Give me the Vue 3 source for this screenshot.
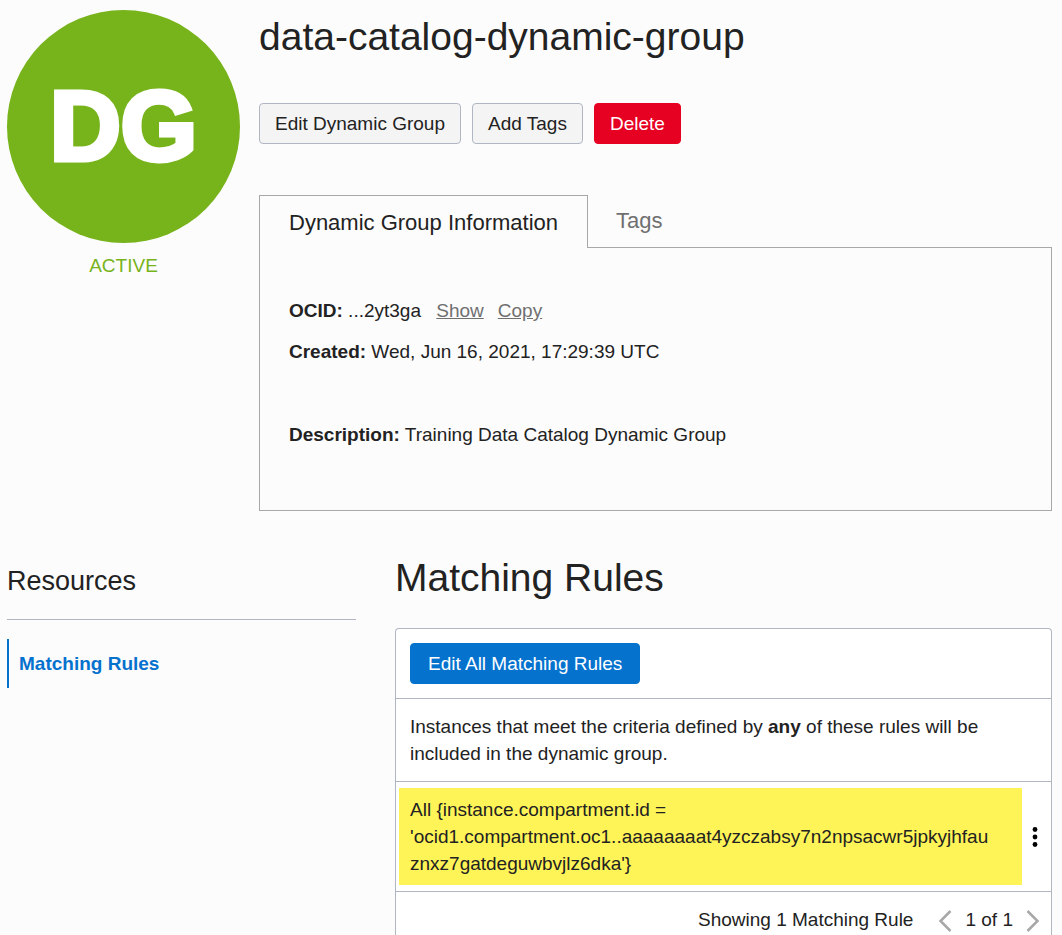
<script setup>
import { ref } from 'vue'

const activeTab = ref('info')
const showOcid = ref(false)
const rules = [
  "All {instance.compartment.id = 'ocid1.compartment.oc1..aaaaaaaat4yzczabsy7n2npsacwr5jpkyjhfauznxz7gatdeguwbvjlz6dka'}",
]
</script>

<template>
  <div class="page">
    <header class="summary">
      <aside class="status">
        <div class="badge">DG</div>
        <p class="state">ACTIVE</p>
      </aside>

      <div class="details">
        <h1>data-catalog-dynamic-group</h1>
        <div class="actions">
          <button type="button" class="btn">Edit Dynamic Group</button>
          <button type="button" class="btn">Add Tags</button>
          <button type="button" class="btn danger">Delete</button>
        </div>

        <div class="tabs" role="tablist">
          <button type="button" role="tab" class="tab" :class="{ active: activeTab === 'info' }" :aria-selected="activeTab === 'info'" @click="activeTab = 'info'">Dynamic Group Information</button>
          <button type="button" role="tab" class="tab" :class="{ active: activeTab === 'tags' }" :aria-selected="activeTab === 'tags'" @click="activeTab = 'tags'">Tags</button>
        </div>
        <div class="panel" role="tabpanel">
          <p><strong>OCID:</strong> ...2yt3ga <a href="#" class="first" @click.prevent="showOcid = !showOcid">Show</a><a href="#" @click.prevent>Copy</a></p>
          <p><strong>Created:</strong> Wed, Jun 16, 2021, 17:29:39 UTC</p>
          <p class="description"><strong>Description:</strong> Training Data Catalog Dynamic Group</p>
        </div>
      </div>
    </header>

    <div class="lower">
      <nav class="resources" aria-label="Resources">
        <h2>Resources</h2>
        <a href="#rules">Matching Rules</a>
      </nav>

      <main id="rules">
        <h1>Matching Rules</h1>
        <section class="card">
          <div class="toolbar">
            <button type="button" class="btn primary">Edit All Matching Rules</button>
          </div>
          <p class="intro">Instances that meet the criteria defined by <strong>any</strong> of these rules will be included in the dynamic group.</p>
          <div v-for="rule in rules" :key="rule" class="rule">
            <p>{{ rule }}</p>
            <button type="button" class="icon menu" aria-label="Rule actions">
              <svg width="6" height="20" viewBox="0 0 6 20"><circle cx="3" cy="2.500" r="2.4" /><circle cx="3" cy="10" r="2.4" /><circle cx="3" cy="17.500" r="2.4" /></svg>
            </button>
          </div>
          <footer>
            <span class="count">Showing 1 Matching Rule</span>
            <button type="button" class="icon" aria-label="Previous page">
              <svg width="14" height="24" viewBox="0 0 14 24"><path d="M12.500 3 2.500 13l10 10" /></svg>
            </button>
            <span class="pages">1 of 1</span>
            <button type="button" class="icon" aria-label="Next page">
              <svg width="14" height="24" viewBox="0 0 14 24"><path d="m1.500 3 10 10-10 10" /></svg>
            </button>
          </footer>
        </section>
      </main>
    </div>
  </div>
</template>

<style>
html,
body {
  background: #fcfcfc;
}
</style>

<style scoped>
* {
  box-sizing: border-box;
}
.page {
  padding: 10px 10px 0 7px;
  font-family: "Liberation Sans", Arial, sans-serif;
  font-size: 19px;
  line-height: 27px;
  color: #222;
}
h1,
h2,
p {
  margin: 0;
  font-weight: 400;
}
h1 {
  font-size: 39px;
  line-height: 54px;
}
button {
  font: inherit;
  color: inherit;
  cursor: pointer;
}
.summary {
  display: grid;
  grid-template-columns: 233px minmax(0, 1fr);
  column-gap: 19px;
}
.badge {
  display: flex;
  align-items: center;
  justify-content: center;
  aspect-ratio: 1;
  border-radius: 50%;
  background: #77b31a;
  color: #fff;
  font-weight: 700;
  font-size: 98px;
  -webkit-text-stroke: 5px #fff;
}
.state {
  margin-top: 9px;
  text-align: center;
  color: #77b31a;
}
.actions {
  display: flex;
  gap: 11px;
  margin-top: 39px;
}
.btn {
  height: 41px;
  padding: 0 15px;
  border: 1px solid #b0b7c3;
  border-radius: 4px;
  background: #f4f4f4;
}
.danger {
  border-color: #e60021;
  background: #e60021;
  color: #fff;
}
.primary {
  padding: 0 17px;
  border-color: #0572ce;
  background: #0572ce;
  color: #fff;
}
.tabs {
  display: flex;
  margin-top: 51px;
}
.tab {
  height: 51px;
  padding: 0 28px;
  border: 0;
  background: none;
  font-size: 22px;
  color: #707070;
}
.tab.active {
  height: 53px;
  margin-bottom: -1px;
  padding: 0 29px;
  border: 1px solid #a8a8a8;
  border-bottom: 0;
  background: #fcfcfc;
  color: #222;
  z-index: 1;
}
.panel {
  min-height: 264px;
  padding: 49px 29px;
  border: 1px solid #a8a8a8;
}
.panel p + p {
  margin-top: 14px;
}
.panel .description {
  margin-top: 56px;
}
.panel a {
  margin-left: 14px;
  color: #707070;
}
.panel .first {
  margin-left: 10px;
}
.lower {
  display: grid;
  grid-template-columns: 349px minmax(0, 1fr);
  column-gap: 39px;
  margin-top: 40px;
}
.resources h2 {
  padding: 15px 0 23px;
  border-bottom: 1px solid #b0b7c3;
  font-size: 27px;
  line-height: 30px;
}
.resources a {
  display: block;
  margin-top: 19px;
  padding: 11px 10px;
  border-left: 2px solid #0572ce;
  color: #0572ce;
  font-weight: 700;
  text-decoration: none;
}
.card {
  margin-top: 23px;
  border: 1px solid #b0b7c3;
  border-bottom: 0;
  border-radius: 4px 4px 0 0;
  background: #fff;
}
.toolbar {
  padding: 14px;
}
.intro {
  padding: 14px;
  border-top: 1px solid #b0b7c3;
}
.rule {
  display: flex;
  gap: 10px;
  padding: 6px 13px 6px 3px;
  border-top: 1px solid #b0b7c3;
}
.rule p {
  flex: 1;
  min-width: 0;
  padding: 8px 28px 8px 11px;
  background: #fff457;
  overflow-wrap: anywhere;
}
.icon {
  display: flex;
  align-items: center;
  padding: 0;
  border: 0;
  background: none;
}
.icon path {
  fill: none;
  stroke: #a8a8a8;
  stroke-width: 2.5;
}
footer {
  display: flex;
  justify-content: flex-end;
  align-items: center;
  padding: 14px 11px 2px;
  border-top: 1px solid #b0b7c3;
}
.count {
  margin-right: 25px;
}
.pages {
  margin: 0 13px;
}
</style>
